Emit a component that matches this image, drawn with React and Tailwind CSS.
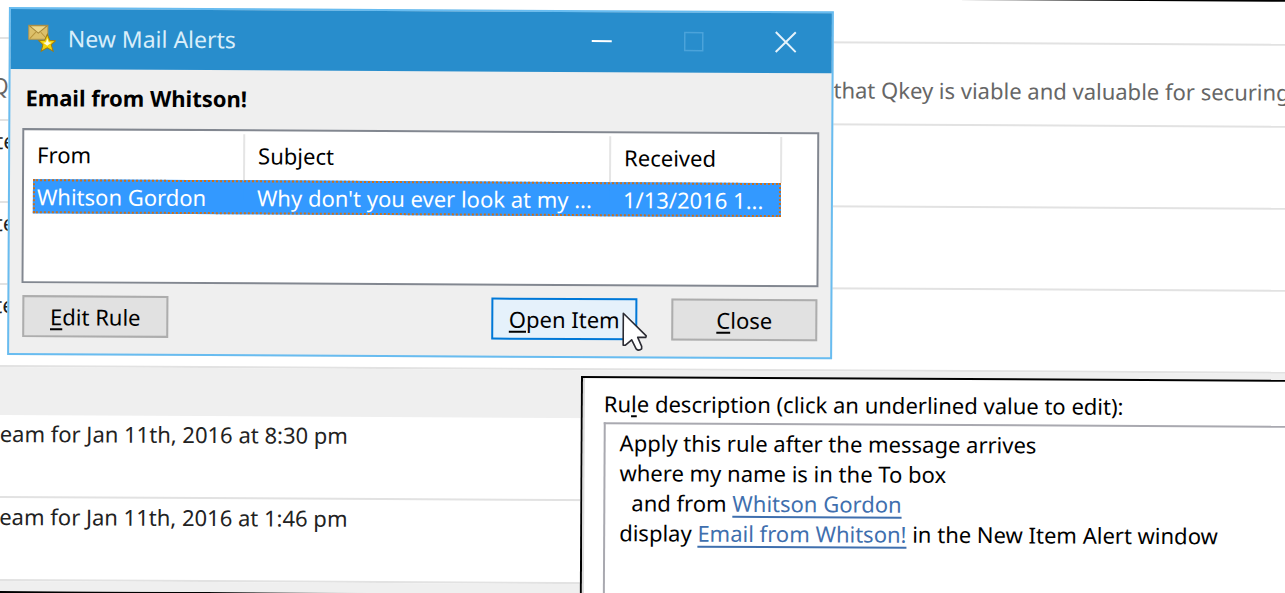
import React from "react";

const mailRows = [
  { left: "", right: "", className: "h-[44px]" },
  {
    left: "Q",
    right: "that Qkey is viable and valuable for securing",
    className: "h-[82px] pt-[31px] -indent-2 text-[#666666]",
  },
  { left: "te", right: "", className: "h-[82px] pt-1 -indent-1 text-[#222222]" },
  { left: "te", right: "", className: "h-[82px] pt-1 -indent-1 text-[#222222]" },
  { left: "te", right: "", className: "h-[82px] pt-1 -indent-1 text-[#222222]" },
];

const streamRows = [
  "eam for Jan 11th, 2016 at 8:30 pm",
  "eam for Jan 11th, 2016 at 1:46 pm",
];

const alerts = [
  {
    from: "Whitson Gordon",
    subject: "Why don't you ever look at my ...",
    received: "1/13/2016 1...",
  },
];

const MailAlertIcon = () => (
  <svg width="28" height="28" viewBox="0 0 28 28" aria-hidden="true">
    <rect x="1" y="1" width="19" height="14" fill="#dcc06a" stroke="#b8964a" />
    <path d="M1.5 1.5 L10.5 9 L19.5 1.5 Z" fill="#ecd88c" stroke="#a58638" />
    <path d="M2 14.5 L8 8 M19 14.5 L13 8" stroke="#b8943c" fill="none" />
    <path
      d="M19.5 10 L22 16 L28 16.4 L23.5 20.4 L25.5 27 L19.5 23.6 L13.5 27 L15.2 20.4 L11 16.4 L17 16 Z"
      fill="#f3d40a"
      stroke="#a07c14"
      strokeWidth="1"
    />
    <path
      d="M19.5 14 L21 18 L24 18.4 L21.4 20 L19.5 21.4 L17.6 20 L15.5 18.4 L18.2 18 Z"
      fill="#fffbd8"
    />
  </svg>
);

const Cursor = () => (
  <svg
    className="pointer-events-none absolute top-[13px] left-[130px]"
    width="28"
    height="42"
    viewBox="0 0 28 42"
    aria-hidden="true"
  >
    <path
      d="M2 2 V34 L4 34 L10.5 28.5 L15 37.5 Q17.5 40 20.5 37.5 V35 L16.5 26 H24.5 L25 24.5 Z"
      fill="#ffffff"
      stroke="#2b2b33"
      strokeWidth="1.6"
      strokeLinejoin="round"
    />
  </svg>
);

// Button label with its access key underlined
const KeyLabel = ({ text }) => (
  <>
    <span className="underline decoration-2 underline-offset-3">{text[0]}</span>
    {text.slice(1)}
  </>
);

const MailList = () => (
  <div className="border-y-2 border-black bg-white">
    <ul>
      {mailRows.map((row, index) => (
        <li
          key={index}
          className={`flex overflow-hidden border-b-2 border-[#e2e2e2] whitespace-nowrap ${row.className}`}
        >
          <span className="w-[834px] shrink-0">{row.left}</span>
          <span className="indent-0">{row.right}</span>
        </li>
      ))}
    </ul>
    <div className="h-[48px] bg-[#efefef]"></div>
    <ul>
      {streamRows.map((row) => (
        <li
          key={row}
          className="h-[83px] border-b-2 border-[#e2e2e2] pt-[3px] pl-[2px] text-[#222222]"
        >
          {row}
        </li>
      ))}
    </ul>
    <div className="h-[10px] bg-[#efefef]"></div>
  </div>
);

const TitleBar = () => (
  <header className="flex h-[60px] items-center bg-[#288dcc] pr-[35px] pb-[3px] pl-[17px]">
    <MailAlertIcon />
    <h1 className="ml-[12px] flex-1 text-[23px] text-[#d9eefa]">
      New Mail Alerts
    </h1>
    <div className="flex gap-[70px]">
      <button aria-label="Minimize">
        <svg width="22" height="22" viewBox="0 0 22 22">
          <path d="M1 11 H21" stroke="#ffffff" strokeWidth="2" />
        </svg>
      </button>
      <button aria-label="Maximize" disabled>
        <svg width="22" height="22" viewBox="0 0 22 22">
          <rect x="2" y="2" width="18" height="18" fill="none" stroke="#4ba3da" strokeWidth="1.5" />
        </svg>
      </button>
      <button aria-label="Close window">
        <svg width="22" height="22" viewBox="0 0 22 22">
          <path d="M1 1 L21 21 M21 1 L1 21" stroke="#e4f2fb" strokeWidth="2" />
        </svg>
      </button>
    </div>
  </header>
);

const AlertsTable = () => (
  <div className="h-[155px] border-2 border-[#828790] bg-white pt-[3px] pl-[9px]">
    <table className="w-[748px] table-fixed border-collapse text-left whitespace-nowrap">
      <colgroup>
        <col className="w-[211px]" />
        <col className="w-[366px]" />
        <col className="w-[171px]" />
      </colgroup>
      <thead>
        <tr className="h-[46px]">
          <th className="border-r-2 border-[#e5e5e5] pb-1 pl-1 font-normal">From</th>
          <th className="border-r-2 border-[#e5e5e5] pb-1 pl-[13px] font-normal">Subject</th>
          <th className="border-r-2 border-[#e5e5e5] pb-1 pl-[13px] font-normal">Received</th>
        </tr>
      </thead>
      <tbody>
        {alerts.map((alert) => (
          <tr
            key={alert.subject}
            className="h-[34px] bg-[#3399ff] text-white outline-2 -outline-offset-2 outline-[#cc6f1a] outline-dotted"
          >
            <td className="bg-[#3399ff] pl-1">{alert.from}</td>
            <td className="bg-[#3399ff] pl-[13px]">{alert.subject}</td>
            <td className="bg-[#3399ff] pl-[13px]">{alert.received}</td>
          </tr>
        ))}
      </tbody>
    </table>
  </div>
);

const AlertsWindow = () => (
  <section className="absolute top-[14px] left-[9px] w-[825px] border-2 border-[#68bcf0] bg-[#efefef]">
    <TitleBar />
    <div className="px-3 pb-4">
      <h2 className="flex h-[59px] items-center pb-[3px] pl-[3px] font-bold text-black">
        Email from Whitson!
      </h2>
      <AlertsTable />
      <div className="mt-3 flex gap-[34px] px-px">
        <button className="mr-auto h-[42px] w-[146px] border-2 border-[#adadad] bg-[#e1e1e1]">
          <KeyLabel text="Edit Rule" />
        </button>
        <div className="relative">
          <button className="h-[42px] w-[146px] border-2 border-[#0078d7] bg-[#e5f1fb]">
            <KeyLabel text="Open Item" />
          </button>
          <Cursor />
        </div>
        <button className="h-[42px] w-[146px] border-2 border-[#adadad] bg-[#e1e1e1]">
          <KeyLabel text="Close" />
        </button>
      </div>
    </div>
  </section>
);

const RuleWindow = () => (
  <section className="absolute top-[380px] right-0 bottom-0 left-[583px] flex flex-col border-t-2 border-l-2 border-black bg-white">
    <div className="flex flex-1 flex-col border-l-2 border-[#dcdcdc] pt-[10px] pl-[19px]">
      <h2>
        Ru<span className="underline decoration-2 underline-offset-3">l</span>e
        description (click an underlined value to edit):
      </h2>
      <div className="mt-1 flex-1 border-t-2 border-l-2 border-[#a9a9b0] pt-[3px] pl-[14px] whitespace-nowrap">
        <p>Apply this rule after the message arrives</p>
        <p>where my name is in the To box</p>
        <p className="pl-3">
          and from{" "}
          <a href="#from" className="text-[#3f6fae] underline decoration-2 underline-offset-4">
            Whitson Gordon
          </a>
        </p>
        <p>
          display{" "}
          <a href="#message" className="text-[#3f6fae] underline decoration-2 underline-offset-4">
            Email from Whitson!
          </a>{" "}
          in the New Item Alert window
        </p>
      </div>
    </div>
  </section>
);

const App = () => {
  return (
    <main className="h-screen overflow-hidden bg-white font-['Noto_Sans',sans-serif] text-[22px] leading-[30px] text-black">
      {/* The whole desktop is tilted slightly clockwise */}
      <div className="relative -mt-[7px] -mr-2 origin-top-left rotate-[0.3deg]">
        <MailList />
        <AlertsWindow />
        <RuleWindow />
      </div>
    </main>
  );
};

export default App;
